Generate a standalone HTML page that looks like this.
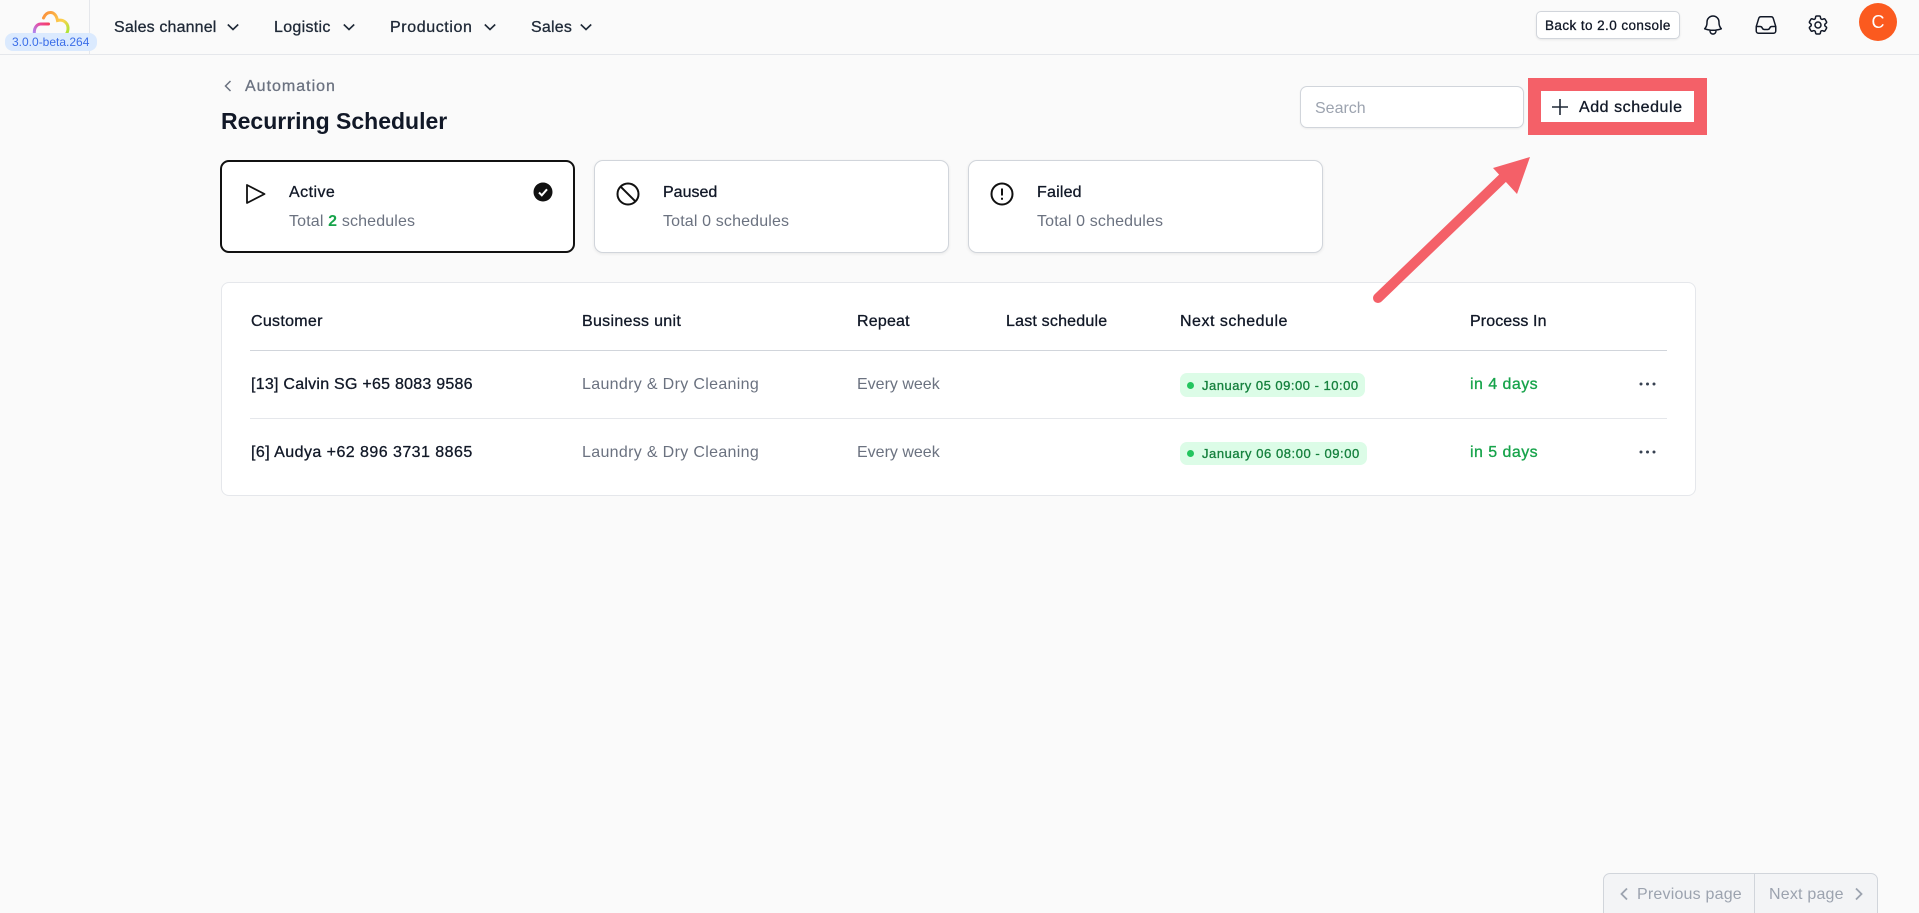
<!DOCTYPE html>
<html lang="en">
<head>
<meta charset="utf-8">
<title>Recurring Scheduler</title>
<style>
html,body{margin:0;padding:0;width:1919px;height:913px;overflow:hidden;background:#fafafa;font-family:"Liberation Sans",sans-serif;color:#111827}
#root{position:relative;width:1919px;height:913px;overflow:hidden;background:#fafafa}
.a{position:absolute}
.t{position:absolute;white-space:nowrap;line-height:24px;height:24px;font-size:16px}
.m{-webkit-text-stroke:.3px currentColor}
.g{color:#6b7280}
.card{position:absolute;top:160px;height:93px;background:#fff;border:1px solid #d1d5db;border-radius:9px;box-sizing:border-box;box-shadow:0 1px 3px rgba(0,0,0,.08)}
svg{position:absolute;overflow:visible}
.pill{position:absolute;background:#dcfce7;border-radius:7px}
.dot{position:absolute;width:7px;height:7px;border-radius:50%;background:#22c55e}
</style>
</head>
<body>
<div id="root">
<!-- Header -->
<div class="a" style="left:0;top:0;width:1919px;height:55px;background:#fafafa;border-bottom:1px solid #e5e7eb;box-sizing:border-box"></div>
<div class="a" style="left:89px;top:0;width:1px;height:54px;background:#e5e7eb"></div>
<svg style="left:0;top:0" width="90" height="54" viewBox="0 0 90 54" fill="none">
<defs>
<linearGradient id="lg1" x1="34" y1="34" x2="48" y2="22" gradientUnits="userSpaceOnUse"><stop offset="0" stop-color="#a78bfa"/><stop offset=".6" stop-color="#ec4899"/><stop offset="1" stop-color="#f43f5e"/></linearGradient>
<linearGradient id="lg2" x1="44" y1="14" x2="68" y2="34" gradientUnits="userSpaceOnUse"><stop offset="0" stop-color="#fb923c"/><stop offset=".6" stop-color="#fcd34d"/><stop offset="1" stop-color="#a3e635"/></linearGradient>
</defs>
<path d="M34.500 35c-1-6 1.500-10.500 6-11h8" stroke="url(#lg1)" stroke-width="3" stroke-linecap="round"/>
<path d="M43.500 18c1.500-3.500 4-5.500 7-5.500 3.500 0 6 3 7 8 5.500-1.500 10 2 10.500 7 .2 3-.5 5-2 7" stroke="url(#lg2)" stroke-width="3" stroke-linecap="round"/>
</svg>
<div class="a" style="left:5px;top:33px;width:92px;height:18px;background:#dbeafe;border-radius:8px"></div>
<div class="t" style="left:12px;top:30px;font-size:12px;color:#3b6ee8">3.0.0-beta.264</div>

<div class="t m" style="left:114px;top:16px;color:#1f2937;letter-spacing:.15px">Sales channel</div>
<div class="t m" style="left:274px;top:16px;color:#1f2937;letter-spacing:.3px">Logistic</div>
<div class="t m" style="left:390px;top:16px;color:#1f2937;letter-spacing:.6px">Production</div>
<div class="t m" style="left:531px;top:16px;color:#1f2937;letter-spacing:.2px">Sales</div>
<svg style="left:227px;top:21px" width="12" height="12" viewBox="0 0 12 12" fill="none" stroke="#1f2937" stroke-width="1.600"><path d="M.8 3.500 6 8.500l5.200-5"/></svg>
<svg style="left:343px;top:21px" width="12" height="12" viewBox="0 0 12 12" fill="none" stroke="#1f2937" stroke-width="1.600"><path d="M.8 3.500 6 8.500l5.200-5"/></svg>
<svg style="left:484px;top:21px" width="12" height="12" viewBox="0 0 12 12" fill="none" stroke="#1f2937" stroke-width="1.600"><path d="M.8 3.500 6 8.500l5.200-5"/></svg>
<svg style="left:580px;top:21px" width="12" height="12" viewBox="0 0 12 12" fill="none" stroke="#1f2937" stroke-width="1.600"><path d="M.8 3.500 6 8.500l5.200-5"/></svg>

<div class="a" style="left:1536px;top:11px;width:144px;height:28px;background:#fff;border:1px solid #d1d5db;border-radius:5px;box-sizing:border-box;box-shadow:0 1px 2px rgba(0,0,0,.08)"></div>
<div class="t m" style="left:1545px;top:14px;font-size:13.500px;color:#111827;letter-spacing:.42px">Back to 2.0 console</div>

<svg style="left:1701px;top:13px" width="24" height="24" viewBox="0 0 24 24" fill="none" stroke="#111827" stroke-width="1.500" stroke-linecap="round" stroke-linejoin="round"><path d="M14.857 17.082a23.848 23.848 0 005.454-1.31A8.967 8.967 0 0118 9.750v-.7V9A6 6 0 006 9v.75a8.967 8.967 0 01-2.312 6.022c1.733.64 3.560 1.085 5.455 1.310m5.714 0a24.255 24.255 0 01-5.714 0m5.714 0a3 3 0 11-5.714 0"/></svg>
<svg style="left:1754px;top:13px" width="24" height="24" viewBox="0 0 24 24" fill="none" stroke="#111827" stroke-width="1.500" stroke-linecap="round" stroke-linejoin="round"><path d="M2.250 13.500h3.860a2.250 2.250 0 012.012 1.244l.256.512a2.250 2.250 0 002.013 1.244h3.218a2.250 2.250 0 002.013-1.244l.256-.512a2.250 2.250 0 012.013-1.244h3.859m-19.500.338V18a2.250 2.250 0 002.250 2.250h15A2.250 2.250 0 0021.750 18v-4.162c0-.224-.034-.447-.1-.661L19.240 5.338a2.250 2.250 0 00-2.150-1.588H6.911a2.250 2.250 0 00-2.150 1.588L2.350 13.177a2.250 2.250 0 00-.1.661z"/></svg>
<svg style="left:1806px;top:13px" width="24" height="24" viewBox="0 0 24 24" fill="none" stroke="#111827" stroke-width="1.500" stroke-linecap="round" stroke-linejoin="round"><path d="M9.594 3.940c.09-.542.56-.94 1.110-.94h2.593c.55 0 1.020.398 1.110.94l.213 1.281c.063.374.313.686.645.87.074.04.147.083.22.127.324.196.72.257 1.075.124l1.217-.456a1.125 1.125 0 011.370.49l1.296 2.247a1.125 1.125 0 01-.26 1.431l-1.003.827c-.293.24-.438.613-.431.992a6.759 6.759 0 010 .255c-.007.378.138.75.43.99l1.005.828c.424.35.534.954.26 1.430l-1.298 2.247a1.125 1.125 0 01-1.369.491l-1.217-.456c-.355-.133-.75-.072-1.076.124a6.570 6.570 0 01-.22.128c-.331.183-.581.495-.644.869l-.213 1.280c-.09.543-.56.941-1.110.941h-2.594c-.55 0-1.020-.398-1.110-.94l-.213-1.281c-.062-.374-.312-.686-.644-.87a6.520 6.520 0 01-.22-.127c-.325-.196-.72-.257-1.076-.124l-1.217.456a1.125 1.125 0 01-1.369-.49l-1.297-2.247a1.125 1.125 0 01.26-1.431l1.004-.827c.292-.24.437-.613.43-.992a6.932 6.932 0 010-.255c.007-.378-.138-.75-.43-.99l-1.004-.828a1.125 1.125 0 01-.26-1.430l1.297-2.247a1.125 1.125 0 011.370-.491l1.216.456c.356.133.751.072 1.076-.124.072-.044.146-.087.22-.128.332-.183.582-.495.644-.869l.214-1.281z"/><circle cx="12" cy="12" r="3"/></svg>
<div class="a" style="left:1859px;top:3px;width:38px;height:38px;border-radius:50%;background:#fb5a1f"></div>
<div class="t" style="left:1859px;top:10px;width:38px;text-align:center;color:#fff;font-size:18px">C</div>

<!-- Title area -->
<svg style="left:222px;top:79px" width="12" height="14" viewBox="0 0 12 14" fill="none" stroke="#6b7280" stroke-width="1.500"><path d="M8.500 2 3.500 7l5 5"/></svg>
<div class="t m g" style="left:245px;top:75px;letter-spacing:1px">Automation</div>
<div class="t" style="left:221px;top:109px;font-size:23px;font-weight:700;color:#111827;line-height:24px">Recurring Scheduler</div>

<div class="a" style="left:1300px;top:86px;width:224px;height:42px;background:#fff;border:1px solid #d1d5db;border-radius:7px;box-sizing:border-box;box-shadow:0 1px 2px rgba(0,0,0,.06)"></div>
<div class="t" style="left:1315px;top:97px;color:#9ca3af">Search</div>

<div class="a" style="left:1528px;top:78px;width:179px;height:57px;background:#f46068"></div>
<div class="a" style="left:1541px;top:91px;width:153px;height:31px;background:#fff"></div>
<svg style="left:1552px;top:99px" width="16" height="16" viewBox="0 0 16 16" fill="none" stroke="#1f2937" stroke-width="1.600"><path d="M8 0v16M0 8h16"/></svg>
<div class="t m" style="left:1579px;top:96px;letter-spacing:.55px">Add schedule</div>

<!-- Status cards -->
<div class="card" style="left:220px;width:355px;border:2px solid #111;box-shadow:none"></div>
<div class="card" style="left:594px;width:355px"></div>
<div class="card" style="left:968px;width:355px"></div>

<svg style="left:244px;top:182px" width="24" height="24" viewBox="0 0 24 24" fill="none" stroke="#111" stroke-width="1.800" stroke-linejoin="round"><path d="M3 3v18l17.500-9z"/></svg>
<div class="t m" style="left:289px;top:181px;letter-spacing:.45px">Active</div>
<div class="t g" style="left:289px;top:210px;letter-spacing:.15px">Total <span style="color:#16a34a;font-weight:700">2</span> schedules</div>
<svg style="left:533px;top:182px" width="20" height="20" viewBox="0 0 20 20"><circle cx="10" cy="10" r="9.500" fill="#111"/><path d="M6 10.500l2.800 2.800L14 7.300" fill="none" stroke="#fff" stroke-width="2"/></svg>

<svg style="left:616px;top:182px" width="24" height="24" viewBox="0 0 24 24" fill="none" stroke="#111" stroke-width="2"><circle cx="12" cy="12" r="10.500"/><path d="M4.800 4.800 19.200 19.200"/></svg>
<div class="t m" style="left:663px;top:181px">Paused</div>
<div class="t g" style="left:663px;top:210px;letter-spacing:.15px">Total 0 schedules</div>

<svg style="left:990px;top:182px" width="24" height="24" viewBox="0 0 24 24" fill="none" stroke="#111" stroke-width="2"><circle cx="12" cy="12" r="10.500"/><path d="M12 6.500v7M12 15.700v2"/></svg>
<div class="t m" style="left:1037px;top:181px;letter-spacing:.2px">Failed</div>
<div class="t g" style="left:1037px;top:210px;letter-spacing:.15px">Total 0 schedules</div>

<!-- Table -->
<div class="a" style="left:221px;top:282px;width:1475px;height:214px;background:#fff;border:1px solid #e5e7eb;border-radius:8px;box-sizing:border-box"></div>
<div class="a" style="left:250px;top:350px;width:1417px;height:1px;background:#d1d5db"></div>
<div class="a" style="left:250px;top:418px;width:1417px;height:1px;background:#e5e7eb"></div>

<div class="t m" style="left:251px;top:310px;letter-spacing:.3px">Customer</div>
<div class="t m" style="left:582px;top:310px;letter-spacing:.3px">Business unit</div>
<div class="t m" style="left:857px;top:310px;letter-spacing:.2px">Repeat</div>
<div class="t m" style="left:1006px;top:310px;letter-spacing:.2px">Last schedule</div>
<div class="t m" style="left:1180px;top:310px;letter-spacing:.5px">Next schedule</div>
<div class="t m" style="left:1470px;top:310px;letter-spacing:.1px">Process In</div>

<div class="t m" style="left:251px;top:373px;letter-spacing:.25px">[13] Calvin SG +65 8083 9586</div>
<div class="t g" style="left:582px;top:373px;letter-spacing:.33px">Laundry &amp; Dry Cleaning</div>
<div class="t g" style="left:857px;top:373px">Every week</div>
<div class="pill" style="left:1180px;top:373px;width:185px;height:24px"></div>
<div class="dot" style="left:1187px;top:382px"></div>
<div class="t m" style="left:1202px;top:374px;font-size:13px;color:#15803d;letter-spacing:.5px">January 05 09:00 - 10:00</div>
<div class="t m" style="left:1470px;top:373px;color:#16a34a;letter-spacing:.45px">in 4 days</div>
<svg style="left:1639px;top:382px" width="17" height="4" viewBox="0 0 17 4" fill="#374151"><circle cx="2" cy="2" r="1.500"/><circle cx="8.500" cy="2" r="1.500"/><circle cx="15" cy="2" r="1.500"/></svg>

<div class="t m" style="left:251px;top:441px;letter-spacing:.45px">[6] Audya +62 896 3731 8865</div>
<div class="t g" style="left:582px;top:441px;letter-spacing:.33px">Laundry &amp; Dry Cleaning</div>
<div class="t g" style="left:857px;top:441px">Every week</div>
<div class="pill" style="left:1180px;top:442px;width:187px;height:23px"></div>
<div class="dot" style="left:1187px;top:450px"></div>
<div class="t m" style="left:1202px;top:442px;font-size:13px;color:#15803d;letter-spacing:.55px">January 06 08:00 - 09:00</div>
<div class="t m" style="left:1470px;top:441px;color:#16a34a;letter-spacing:.45px">in 5 days</div>
<svg style="left:1639px;top:450px" width="17" height="4" viewBox="0 0 17 4" fill="#374151"><circle cx="2" cy="2" r="1.500"/><circle cx="8.500" cy="2" r="1.500"/><circle cx="15" cy="2" r="1.500"/></svg>

<!-- Arrow (above the table) -->
<svg style="left:0;top:0" width="1919" height="913" viewBox="0 0 1919 913" fill="none">
<path d="M1378 298 1508 173" stroke="#f46068" stroke-width="10" stroke-linecap="round"/>
<path d="M1530 157 1493 168 1517 194z" fill="#f46068"/>
</svg>

<!-- Pagination -->
<div class="a" style="left:1603px;top:873px;width:275px;height:50px;background:#f3f4f6;border:1px solid #d1d5db;border-radius:7px;box-sizing:border-box"></div>
<div class="a" style="left:1754px;top:873px;width:1px;height:40px;background:#d1d5db"></div>
<svg style="left:1618px;top:887px" width="12" height="14" viewBox="0 0 12 14" fill="none" stroke="#9ca3af" stroke-width="1.800"><path d="M9 1.500 3.500 7 9 12.500"/></svg>
<div class="t" style="left:1637px;top:883px;color:#9ca3af;letter-spacing:.2px">Previous page</div>
<div class="t" style="left:1769px;top:883px;color:#9ca3af;letter-spacing:.2px">Next page</div>
<svg style="left:1853px;top:887px" width="12" height="14" viewBox="0 0 12 14" fill="none" stroke="#9ca3af" stroke-width="1.800"><path d="M3 1.500 8.500 7 3 12.500"/></svg>
</div>
</body>
</html>
